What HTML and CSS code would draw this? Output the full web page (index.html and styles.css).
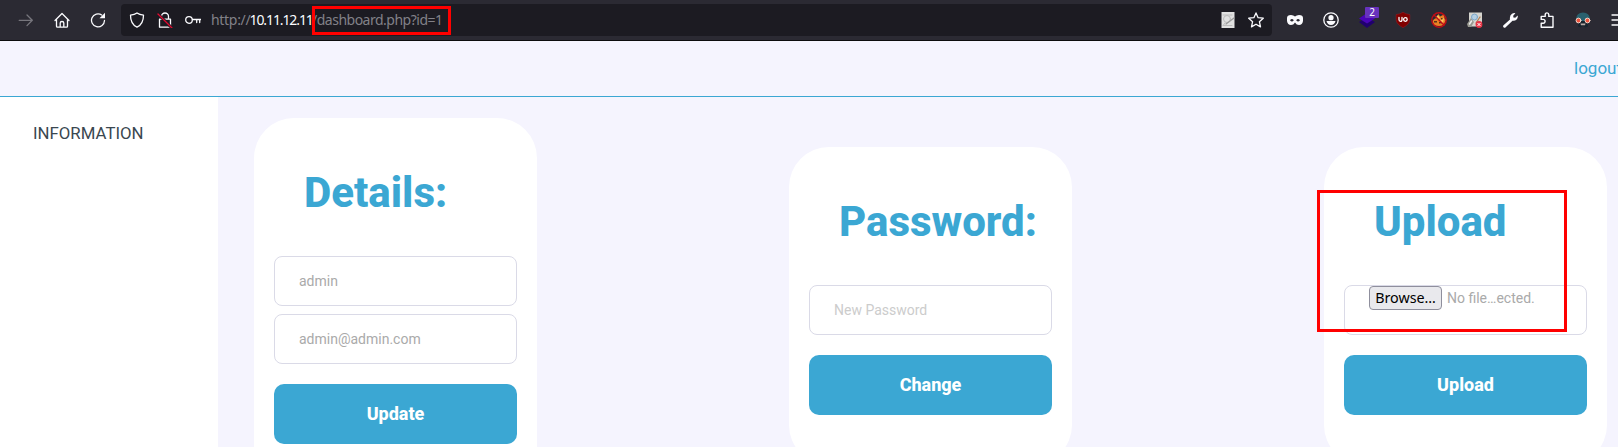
FILE: index.html
```html
<!DOCTYPE html>
<html lang="en">
<head>
<meta charset="utf-8">
<title>Dashboard</title>
<link rel="stylesheet" href="styles.css">
</head>
<body>
<div class="toolbar">
  <div class="nav">
    <svg class="ico dim" viewBox="0 0 16 16"><path d="M1.200 8.300h13M9 3l5.300 5.300L9 13.600"/></svg>
    <svg class="ico" viewBox="0 0 16 16"><path d="M1 8.500 8 1.500l7 7M2.500 7.500v6.700q0 1 1 1h9q1 0 1-1V7.500M6.200 15v-4q0-1.500 1.800-1.500t1.800 1.500v4"/></svg>
    <svg class="ico" viewBox="0 0 16 16"><path d="M14.500 8.500A6.500 6.500 0 1 1 11.700 3"/><path class="solid" d="M15 .7v5.600H9.500z"/></svg>
  </div>
  <div class="urlbar">
    <svg class="ico" viewBox="0 0 16 16"><path d="M8 1C6 2.500 3.500 3 1.500 3.200c0 5 1 9.300 6.500 12 5.500-2.700 6.500-7 6.500-12C12.500 3 10 2.500 8 1z"/></svg>
    <svg class="ico lock" viewBox="0 0 16 16"><path d="M4.500 7V4.500a3.500 3.500 0 0 1 7 0V7M2.500 7.200h11v8h-11z"/><path class="gap" d="m1 2 14 14"/><path class="slash" d="m1 2 14 14"/></svg>
    <svg class="ico key" viewBox="0 0 16 16"><circle cx="4" cy="8" r="3.300"/><path d="M7.500 7.500H16M11.700 8v2.500M14.700 8v2.500"/></svg>
    <div class="url"><span class="scheme">http://</span><span class="host">10.11.12.11</span><span class="path">/dashboard.php?id=1</span></div>
    <svg class="ico sheet" viewBox="0 0 16 16"><path class="paper" d="M1.500 0h13v16h-13z"/><path class="ink" d="M3 3h9M3 13.500h9M5 11l-1.500 2"/><circle class="ink" cx="7" cy="7" r="3.500"/><path class="pen" d="m6 12 8-6"/></svg>
    <svg class="ico star" viewBox="0 0 16 16"><path d="m8 .9 2.100 4.800 5.200.5-3.900 3.500 1.100 5.200L8 12.200l-4.500 2.700 1.100-5.200L.7 6.200l5.200-.5z"/></svg>
  </div>
  <div class="addons">
    <svg class="ico art" viewBox="0 0 16 16"><path fill="#fbfbfe" fill-rule="evenodd" d="M0 6q0-3 4-3 2.500 0 4 1.500Q9.500 3 12 3q4 0 4 3v3q-.6 4-4 4-2.500 0-4-2.500Q6.500 13 4 13 .6 13 0 9zM3 8.300q2 2.400 3.800 0-1.800-2.500-3.800 0zm6.200 0q1.800 2.400 3.800 0-2-2.500-3.800 0z"/></svg>
    <svg class="ico" viewBox="0 0 16 16"><circle cx="8" cy="8" r="7.200"/><circle class="solid" cx="8" cy="5.700" r="2.600"/><path class="solid" d="M3.500 9h9q-1 4-4.500 4T3.500 9z"/></svg>
    <div class="stack">
      <svg class="ico art" viewBox="0 0 16 16"><path fill="#20006e" d="m0 10 8-5 8 5-8 6z"/><path fill="#4a04b8" d="M0 6.500 8 1l8 5.500-8 5z"/></svg>
      <span class="badge">2</span>
    </div>
    <svg class="ico art" viewBox="0 0 16 16"><path fill="#800000" stroke="#a3202a" stroke-width=".4" d="M8 .3q3 2 6.900 2.200v5Q14.900 12 8 15.700 1.100 12 1.100 7.500v-5Q5 2.300 8 .3z"/><path stroke="#fff" stroke-width="1.300" d="M4 5.300v2.500q0 1.500 1.500 1.500T7 7.800V5.300"/><circle cx="10.400" cy="7.500" r="1.800" stroke="#fff" stroke-width="1.300"/></svg>
    <svg class="ico art" viewBox="0 0 16 16"><path fill="#e88024" d="M1.500 11q0-4 4-5l2-4 1.500 2.500 4-2 .7 4.500 1.300 1-1 2q-.5 4-6 4T1.500 11z"/><path fill="#ffc35c" d="m5 5 2-2 2 3-2 2zM9 8l4-2-1 5-3 1z"/><path fill="#573319" d="M3 9h3v1.500H3zM8 10h3v1.500H8zM10 6h1.500v1.500H10z"/><circle cx="8" cy="8" r="7.200" stroke="#c00c16" stroke-width="1.400"/><path stroke="#c00c16" stroke-width="1.400" d="m3 3 10 10"/></svg>
    <svg class="ico art" viewBox="0 0 16 16"><path fill="#d5d4cf" d="M2 .5h13v14H2z"/><path fill="#999991" d="m0 12 4-6 3 4-3 5H1z"/><circle cx="7.500" cy="5" r="3" fill="#b4cfe4" stroke="#7ba6c9"/><path stroke="#eee" stroke-width="1.500" d="m4.500 9-2 3"/><path stroke="#b07b50" stroke-width="1.200" d="m13 5-4 6"/><circle cx="12" cy="12.500" r="3.400" fill="#e83446"/><path stroke="#fff" d="m10.800 11.300 2.400 2.400m0-2.400-2.400 2.400"/></svg>
    <svg class="ico art" viewBox="0 0 16 16"><path fill="#fbfbfe" d="M.7 15.500q-1.200-1-.2-2.200L7 7.400Q6.300 3.500 9 1.800q1.600-1 3.400-.6L10.200 3.700l.2 1.700 1.800.3 2.500-2.300q.5 2.800-1.300 4.400-1.600 1.300-3.900.9L2.700 15.300q-1 1-2 .2z"/></svg>
    <svg class="ico" viewBox="0 0 16 16"><path stroke-width="1.400" d="M2.200 15.200v-4h2a1.900 1.900 0 0 0 0-3.800h-2v-3h4V2.700a1.800 1.800 0 0 1 3.600 0v1.700H14v10.800z"/></svg>
    <svg class="ico art" viewBox="0 0 16 16"><path fill="#29616f" d="M1 7Q1.500.5 8 .5T15 7l-2 2H3z"/><path fill="#18242e" d="M3 9h10v5.500l-2.500 1L8 14l-2.500 1.500-2.500-1z"/><path fill="#b9aaa6" d="M5.500 11.500h5l-.5 1.700H6z"/><circle cx="3.500" cy="8.500" r="2.400" fill="#ef543f" stroke="#f3d5c9"/><circle cx="12.500" cy="8.500" r="2.400" fill="#ef543f" stroke="#f3d5c9"/></svg>
    <svg class="ico" viewBox="0 0 16 16"><path d="M1 3h14M1 8h14M1 13h14"/></svg>
  </div>
  <div class="mark mark-url"></div>
</div>
<header class="header"><a class="logout">logout</a></header>
<div class="body">
  <aside class="sidebar">INFORMATION</aside>
  <main class="cards">
    <section class="card">
      <h1>Details:</h1>
      <div class="field">admin</div>
      <div class="field">admin@admin.com</div>
      <button>Update</button>
    </section>
    <section class="card">
      <h1>Password:</h1>
      <div class="field placeholder">New Password</div>
      <button>Change</button>
    </section>
    <section class="card">
      <h1>Upload</h1>
      <div class="field file"><span class="browse">Browse…</span><span class="filename">No file…ected.</span></div>
      <button>Upload</button>
      <div class="mark mark-upload"></div>
    </section>
  </main>
</div>
</body>
</html>
```
FILE: styles.css
```css
* { box-sizing: border-box; }
body {
  margin: 0;
  width: 1618px;
  height: 447px;
  overflow: hidden;
  background: #f5f4fe;
  font-family: Roboto, sans-serif;
}
.toolbar {
  position: relative;
  display: flex;
  align-items: center;
  height: 41px;
  background: #2b2a33;
  border-bottom: 1px solid #0c0c0d;
}
.ico {
  display: block;
  flex: none;
  width: 16px;
  height: 16px;
  fill: none;
  stroke: #fbfbfe;
  stroke-width: 1.3;
  stroke-linejoin: round;
  stroke-linecap: round;
}
.ico .solid { fill: #fbfbfe; stroke: none; }
.art { stroke: none; stroke-width: 1; }
.dim { stroke: #77767d; }
.nav {
  display: flex;
  flex: none;
  width: 121px;
  padding-left: 18px;
  gap: 20px;
}
.nav .ico:nth-child(2) { margin-left: -.5px; }
.urlbar {
  display: flex;
  flex: none;
  align-items: center;
  width: 1151px;
  height: 32px;
  padding: 0 8px;
  border-radius: 4px;
  background: #1c1b22;
}
.lock { margin-left: 12px; }
.lock .gap { stroke: #1c1b22; stroke-width: 3; }
.lock .slash { stroke: #e2092f; }
.key { margin-left: 12px; }
.url {
  display: flex;
  flex: 1;
  margin-left: 10px;
  font: 14px/20px "Noto Sans", sans-serif;
  color: #828188;
  white-space: pre;
}
.scheme { width: 38.500px; letter-spacing: -.3px; }
.host { width: 62.500px; color: #fbfbfe; letter-spacing: -1.100px; }
.path { letter-spacing: -.5px; }
.sheet .paper { fill: #e1e1e1; stroke: none; }
.sheet .ink { stroke: #bbb; stroke-width: 1; }
.sheet .pen { stroke: #999; stroke-width: 1.2; }
.star { margin: 0 0 0 12px; }
.addons {
  display: flex;
  flex: none;
  margin-left: 15px;
  gap: 20px;
}
.stack { position: relative; width: 16px; }
.badge {
  position: absolute;
  left: 6px;
  top: -5px;
  width: 14px;
  height: 11px;
  border-radius: 1px;
  background: #6732bd;
  color: #fff;
  font: 10px/11px "Noto Sans", sans-serif;
  text-align: center;
}
.mark { position: absolute; border: 3px solid #f00; }
.mark-url { left: 312px; top: 6px; width: 139px; height: 29px; }
.mark-upload { left: -7px; top: 43px; width: 250px; height: 142px; }
.header {
  height: 56px;
  border-bottom: 1px solid #3ba7d3;
  padding: 17px 0 0 1574px;
}
.logout { color: #3ba7d3; font-size: 17px; line-height: 20px; }
.body { display: flex; height: 418px; }
.sidebar {
  flex: none;
  width: 218px;
  padding: 26px 0 0 33px;
  background: #fff;
  color: #3a4750;
  font-size: 16.800px;
  line-height: 20px;
}
.cards {
  display: flex;
  flex: 1;
  align-items: center;
  justify-content: space-between;
  padding: 0 11px 0 36px;
}
.card {
  position: relative;
  width: 283px;
  padding: 50px 20px 50px;
  border-radius: 40px;
  background: #fff;
}
.card h1 {
  margin: 0 0 38px 30px;
  color: #3ba7d3;
  font-size: 42px;
  font-weight: 800;
  line-height: 50px;
}
.field {
  height: 50px;
  margin-bottom: 8px;
  padding: 0 24px;
  border: 1px solid #dadae7;
  border-radius: 8px;
  color: #aaa;
  font-size: 14px;
  line-height: 48px;
}
.placeholder { color: #ccc; }
.card button {
  display: block;
  width: 100%;
  height: 60px;
  margin-top: 20px;
  padding: 0 0 2px;
  border: 0;
  border-radius: 10px;
  background: #3ba7d3;
  color: #fff;
  font: 800 18px Roboto, sans-serif;
}
.file { display: flex; align-items: flex-start; line-height: 24px; white-space: nowrap; }
.browse {
  flex: none;
  width: 73px;
  height: 24px;
  border: 1px solid #8f8f9d;
  border-radius: 4px;
  background: #e9e9ed;
  color: #000;
  font: 14.300px/22px "Noto Sans", sans-serif;
  text-align: center;
}
.filename { margin-left: 5px; }
```
